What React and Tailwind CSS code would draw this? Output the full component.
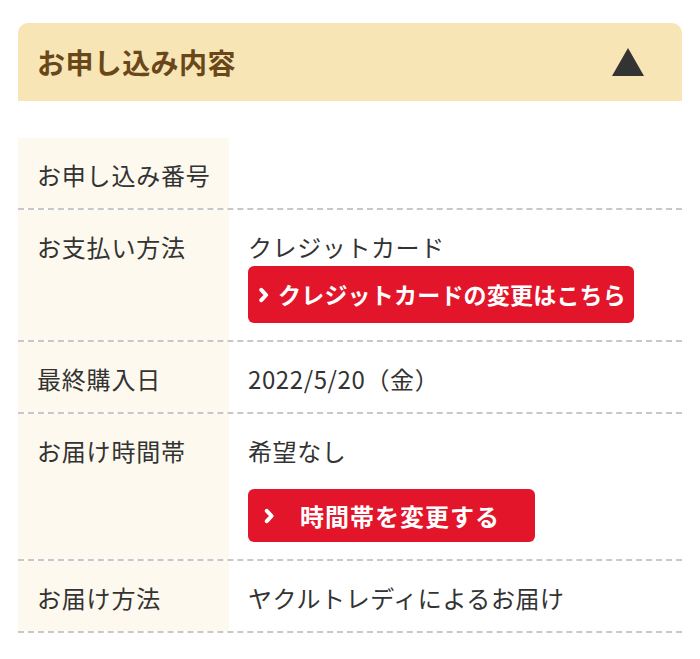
const rows = [
  { label: 'お申し込み番号', value: null },
  {
    label: 'お支払い方法',
    value: 'クレジットカード',
    button: { text: 'クレジットカードの変更はこちら', wide: true },
  },
  { label: '最終購入日', value: '2022/5/20（金）' },
  {
    label: 'お届け時間帯',
    value: '希望なし',
    button: { text: '時間帯を変更する', wide: false },
  },
  { label: 'お届け方法', value: 'ヤクルトレディによるお届け' },
];

const Chevron = ({ className = '' }) => (
  <svg viewBox="0 0 10 16" className={className} fill="none">
    <path d="M2.8 2.8 L7.6 8 L2.8 13.2" stroke="white" strokeWidth="4" strokeLinecap="round" strokeLinejoin="round" />
  </svg>
);

const RedButton = ({ text, wide }) =>
  wide ? (
    <div className="mt-[4px] flex h-[57px] w-[386px] items-center rounded-[6px] bg-[#e3152a] pl-[10px] text-[23px] font-bold tracking-[0.2px] text-white">
      <Chevron className="mr-[9px] h-[16px] w-[11px]" />
      <span>{text}</span>
    </div>
  ) : (
    <div className="mt-[23px] flex h-[53px] w-[287px] items-center rounded-[6px] bg-[#e3152a] pl-[16px] text-[24px] font-bold tracking-[1px] text-white">
      <Chevron className="mr-[26px] h-[16px] w-[10px]" />
      <span>{text}</span>
    </div>
  );

export default function App() {
  return (
    <div
      className="min-h-screen bg-white px-[18px] pt-[23px] text-[#333]"
      style={{ fontFamily: '"Noto Sans CJK JP", "Noto Sans", sans-serif' }}
    >
      {/* header */}
      <div className="flex h-[78px] items-center justify-between rounded-t-[10px] bg-[#f7e5b5] pl-[19px] pr-[38px]">
        <h2 className="text-[28px] font-bold tracking-[0.4px] text-[#6a4719]">お申し込み内容</h2>
        <svg viewBox="0 0 32 28" className="h-[28px] w-[32px]">
          <path d="M16 0 L32 28 L0 28 Z" fill="#333" />
        </svg>
      </div>

      {/* table */}
      <div className="mt-[37px]">
        {rows.map((row) => (
          <div key={row.label} className="flex border-b-2 border-dashed border-[#c8c8c8]">
            <div className="w-[211px] shrink-0 bg-[#fdf9ee] pb-[18px] pl-[19px] pt-[21px] text-[24px] leading-[31px] tracking-[0.8px]">
              {row.label}
            </div>
            <div className="flex-1 pb-[17px] pl-[19px] pt-[21px] text-[24px] leading-[31px] tracking-[0.6px]">
              {row.value}
              {row.button && <RedButton {...row.button} />}
            </div>
          </div>
        ))}
      </div>
    </div>
  );
}
